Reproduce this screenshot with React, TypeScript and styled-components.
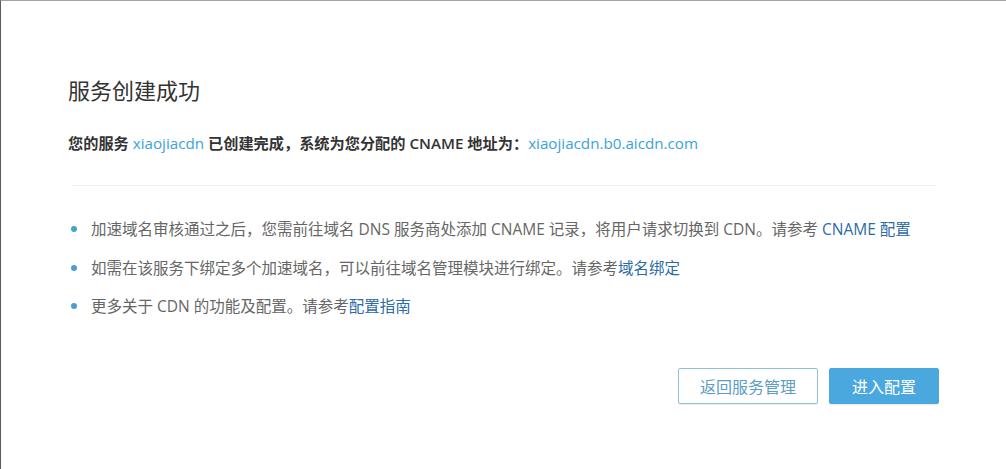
import styled, { createGlobalStyle } from 'styled-components'

const GlobalStyle = createGlobalStyle`
  html, body {
    margin: 0;
    padding: 0;
    background: #fff;
  }
  body {
    font-family: "Open Sans", "Noto Sans CJK SC", sans-serif;
  }
`

const tips = [
  {
    text: '加速域名审核通过之后，您需前往域名 DNS 服务商处添加 CNAME 记录，将用户请求切换到 CDN。请参考 ',
    link: 'CNAME 配置',
  },
  {
    text: '如需在该服务下绑定多个加速域名，可以前往域名管理模块进行绑定。请参考',
    link: '域名绑定',
  },
  {
    text: '更多关于 CDN 的功能及配置。请参考',
    link: '配置指南',
  },
]

export default function App() {
  return (
    <>
      <GlobalStyle />
      <Frame>
        <Panel>
          <Title>服务创建成功</Title>
          <Summary>
            您的服务 <Highlight>xiaojiacdn</Highlight> 已创建完成，系统为您分配的 CNAME 地址为：
            <Highlight>xiaojiacdn.b0.aicdn.com</Highlight>
          </Summary>
          <Divider />
          <TipList>
            {tips.map((tip) => (
              <Tip key={tip.link}>
                {tip.text}
                <TipLink>{tip.link}</TipLink>
              </Tip>
            ))}
          </TipList>
          <Actions>
            <Button>返回服务管理</Button>
            <Button primary>进入配置</Button>
          </Actions>
        </Panel>
      </Frame>
    </>
  )
}

const Frame = styled.div`
  width: 1006px;
  height: 469px;
  box-sizing: border-box;
  border-top: 1px solid #a3a3a3;
  border-left: 1px solid #5a5a5a;
  background: #fff;
`

const Panel = styled.div`
  width: 871px;
  padding: 73px 0 0 67px;
  display: flex;
  flex-direction: column;
`

const Title = styled.h1`
  margin: 0;
  font-size: 22px;
  font-weight: 400;
  line-height: 32px;
  color: #333;
`

const Summary = styled.p`
  margin: 26px 0 0;
  font-size: 15.2px;
  line-height: 22px;
  font-weight: 600;
  color: #333;
`

const Highlight = styled.span`
  color: #3ba3d8;
  font-weight: 400;
`

const Divider = styled.div`
  margin: 31px 0 0 4px;
  height: 1px;
  width: 864px;
  background: #eeeeee;
`

const TipList = styled.ul`
  list-style: none;
  margin: 32px 0 0;
  padding: 0;
  display: flex;
  flex-direction: column;
  gap: 16.5px;
`

const Tip = styled.li`
  position: relative;
  padding-left: 23px;
  font-size: 15.5px;
  line-height: 22px;
  color: #666;

  &::before {
    content: '';
    position: absolute;
    left: 3px;
    top: 8px;
    width: 6px;
    height: 6px;
    border-radius: 50%;
    background: #4a9fd0;
  }
`

const TipLink = styled.a`
  color: #2b6ba6;
  cursor: pointer;
`

const Actions = styled.div`
  margin-top: 51px;
  display: flex;
  justify-content: flex-end;
  gap: 11px;
`

const Button = styled.button<{ primary?: boolean }>`
  height: 36px;
  padding: 0 ${(p) => (p.primary ? '22px' : '19px')};
  min-width: ${(p) => (p.primary ? '109px' : '140px')};
  font-family: "Open Sans", "Noto Sans CJK SC", sans-serif;
  font-size: 16px;
  border-radius: 2px;
  cursor: pointer;
  border: 1px solid ${(p) => (p.primary ? '#4aa8de' : '#8ec3d8')};
  background: ${(p) => (p.primary ? '#4aa8de' : '#fff')};
  color: ${(p) => (p.primary ? '#fff' : '#5b9dc6')};
  box-shadow: 0 1px 1px rgba(0, 0, 0, 0.08);
`
